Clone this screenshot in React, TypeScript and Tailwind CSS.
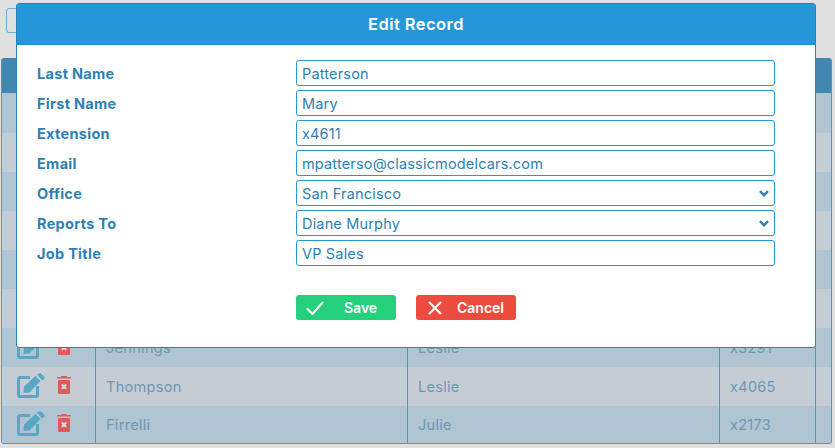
const FIELDS = [
  { label: "Last Name", value: "Patterson" },
  { label: "First Name", value: "Mary" },
  { label: "Extension", value: "x4611" },
  { label: "Email", value: "mpatterso@classicmodelcars.com" },
  { label: "Office", value: "San Francisco", select: true },
  { label: "Reports To", value: "Diane Murphy", select: true },
  { label: "Job Title", value: "VP Sales" },
];

const ROWS = [
  { last: "", first: "", ext: "", bg: "h-[40px] bg-[#b0c4d1]" },
  { last: "", first: "", ext: "", bg: "h-[39px] bg-[#c5cdd4]" },
  { last: "", first: "", ext: "", bg: "h-[39px] bg-[#b0c4d1]" },
  { last: "", first: "", ext: "", bg: "h-[39px] bg-[#c5cdd4]" },
  { last: "", first: "", ext: "", bg: "h-[39px] bg-[#b0c4d1]" },
  { last: "", first: "", ext: "", bg: "h-[39px] bg-[#c5cdd4]" },
  { last: "Jennings", first: "Leslie", ext: "x3291", bg: "h-[39px] bg-[#b0c4d1]" },
  { last: "Thompson", first: "Leslie", ext: "x4065", bg: "h-[39px] bg-[#c5cdd4]" },
  { last: "Firrelli", first: "Julie", ext: "x2173", bg: "h-[37px] bg-[#b0c4d1]" },
];

function EditIcon() {
  return (
    <svg viewBox="0 0 28 25" className="h-[25px] w-[28px]" fill="none">
      <path d="M13 4.500H3.200A1.700 1.700 0 0 0 1.500 6.200v15.600a1.700 1.700 0 0 0 1.700 1.700h15.600a1.700 1.700 0 0 0 1.700-1.700V13" stroke="#5ba6c4" strokeWidth="3" />
      <path d="M7 13.500 18.500 3l5 5L12.500 19.500 6.500 20z" fill="#5ba6c4" />
      <path d="M20 1.800 22 .4a1.500 1.500 0 0 1 2 0l3.300 3.300a1.500 1.500 0 0 1 0 2L25.300 7.500z" fill="#5ba6c4" />
    </svg>
  );
}

function TrashIcon() {
  return (
    <svg viewBox="0 0 14 18" className="h-[18px] w-[14px]">
      <path d="M4.500 0h5l.6 1H14v1.600H0V1h3.900z" fill="#dc5c5c" />
      <path d="M1 4h12v12.500a1.500 1.500 0 0 1-1.500 1.500h-9A1.500 1.500 0 0 1 1 16.500z" fill="#dc5c5c" />
      <path d="M4.800 8.500l4.400 4.400M9.200 8.500l-4.400 4.400" stroke="#d5dce0" strokeWidth="2" />
    </svg>
  );
}

function Field({ value, select }: { value: string; select?: boolean }) {
  return (
    <div className="flex h-[26px] w-[479px] items-center justify-between rounded-[3px] border border-[#2597d9] bg-white pl-[5px] pr-[5px] text-[14.5px] text-[#2f7fb3]">
      <span className="pt-[1px] tracking-[0.17px]">{value}</span>
      {select && (
        <svg viewBox="0 0 10 7" className="h-[7px] w-[10px]" fill="none">
          <path d="M1 1.200 5 5.200 9 1.200" stroke="#2f7fb3" strokeWidth="2.400" />
        </svg>
      )}
    </div>
  );
}

export default function App() {
  return (
    <div className="relative h-[448px] w-[835px] overflow-hidden bg-[#e0e0e0] font-['Inter',sans-serif]">
      <div className="px-[6px] pt-[8px]">
        <div className="h-[25px] w-[60px] rounded-[3px] border border-[#6aaed6]" />
      </div>
      <div className="ml-[1px] mt-[25px] w-[831px] overflow-hidden rounded-[3px] border-b border-r border-l border-[#5e94b3]">
        <div className="h-[35px] bg-[#4287b0]" />
        {ROWS.map((r, i) => (
          <div key={i} className={`flex items-center text-[14.500px] tracking-[0.3px] text-[#6f96b5] ${r.bg}`}>
            <div className="flex h-full w-[94px] items-center gap-[12px] border-r border-[#5e94b3] pb-[3px] pl-[15px]">
              <EditIcon />
              <TrashIcon />
            </div>
            <div className="flex h-full w-[312px] items-center border-r border-[#5e94b3] pl-[10px]">{r.last}</div>
            <div className="flex h-full w-[312px] items-center border-r border-[#5e94b3] pl-[10px]">{r.first}</div>
            <div className="flex h-full w-[96px] items-center border-r border-[#5e94b3] pl-[10px]">{r.ext}</div>
          </div>
        ))}
      </div>

      <div className="absolute left-[16px] top-[3px] h-[345px] w-[800px] overflow-hidden rounded-[3px] border border-[#2a7fb4] bg-white">
        <div className="flex h-[41px] items-center justify-center border-b border-[#2185c0] bg-[#2597d9] text-[16.500px] font-semibold tracking-[0.45px] text-white">
          Edit Record
        </div>
        <div className="flex flex-col gap-[4px] pl-[20px] pt-[15px]">
          {FIELDS.map((f) => (
            <div key={f.label} className="flex items-center">
              <div className="w-[259px] pt-[1px] text-[14.500px] font-bold tracking-[0.3px] text-[#2f7fb3]">{f.label}</div>
              <Field value={f.value} select={f.select} />
            </div>
          ))}
        </div>
        <div className="ml-[279px] mt-[29px] flex gap-[20px]">
          <div className="flex h-[25px] w-[100px] items-center rounded-[3px] bg-[#25d07c] pl-[10px] text-[14px] font-semibold text-white">
            <svg viewBox="0 0 18 14" className="h-[14px] w-[18px]" fill="none">
              <path d="M1 7.500 6.500 13 17 1" stroke="white" strokeWidth="2" />
            </svg>
            <span className="ml-[20px]">Save</span>
          </div>
          <div className="flex h-[25px] w-[100px] items-center rounded-[3px] bg-[#ee4b3f] pl-[12px] text-[14px] font-semibold text-white">
            <svg viewBox="0 0 14 14" className="h-[14px] w-[14px]" fill="none">
              <path d="M1 1 13 13M13 1 1 13" stroke="white" strokeWidth="2.200" />
            </svg>
            <span className="ml-[15px]">Cancel</span>
          </div>
        </div>
      </div>
    </div>
  );
}
